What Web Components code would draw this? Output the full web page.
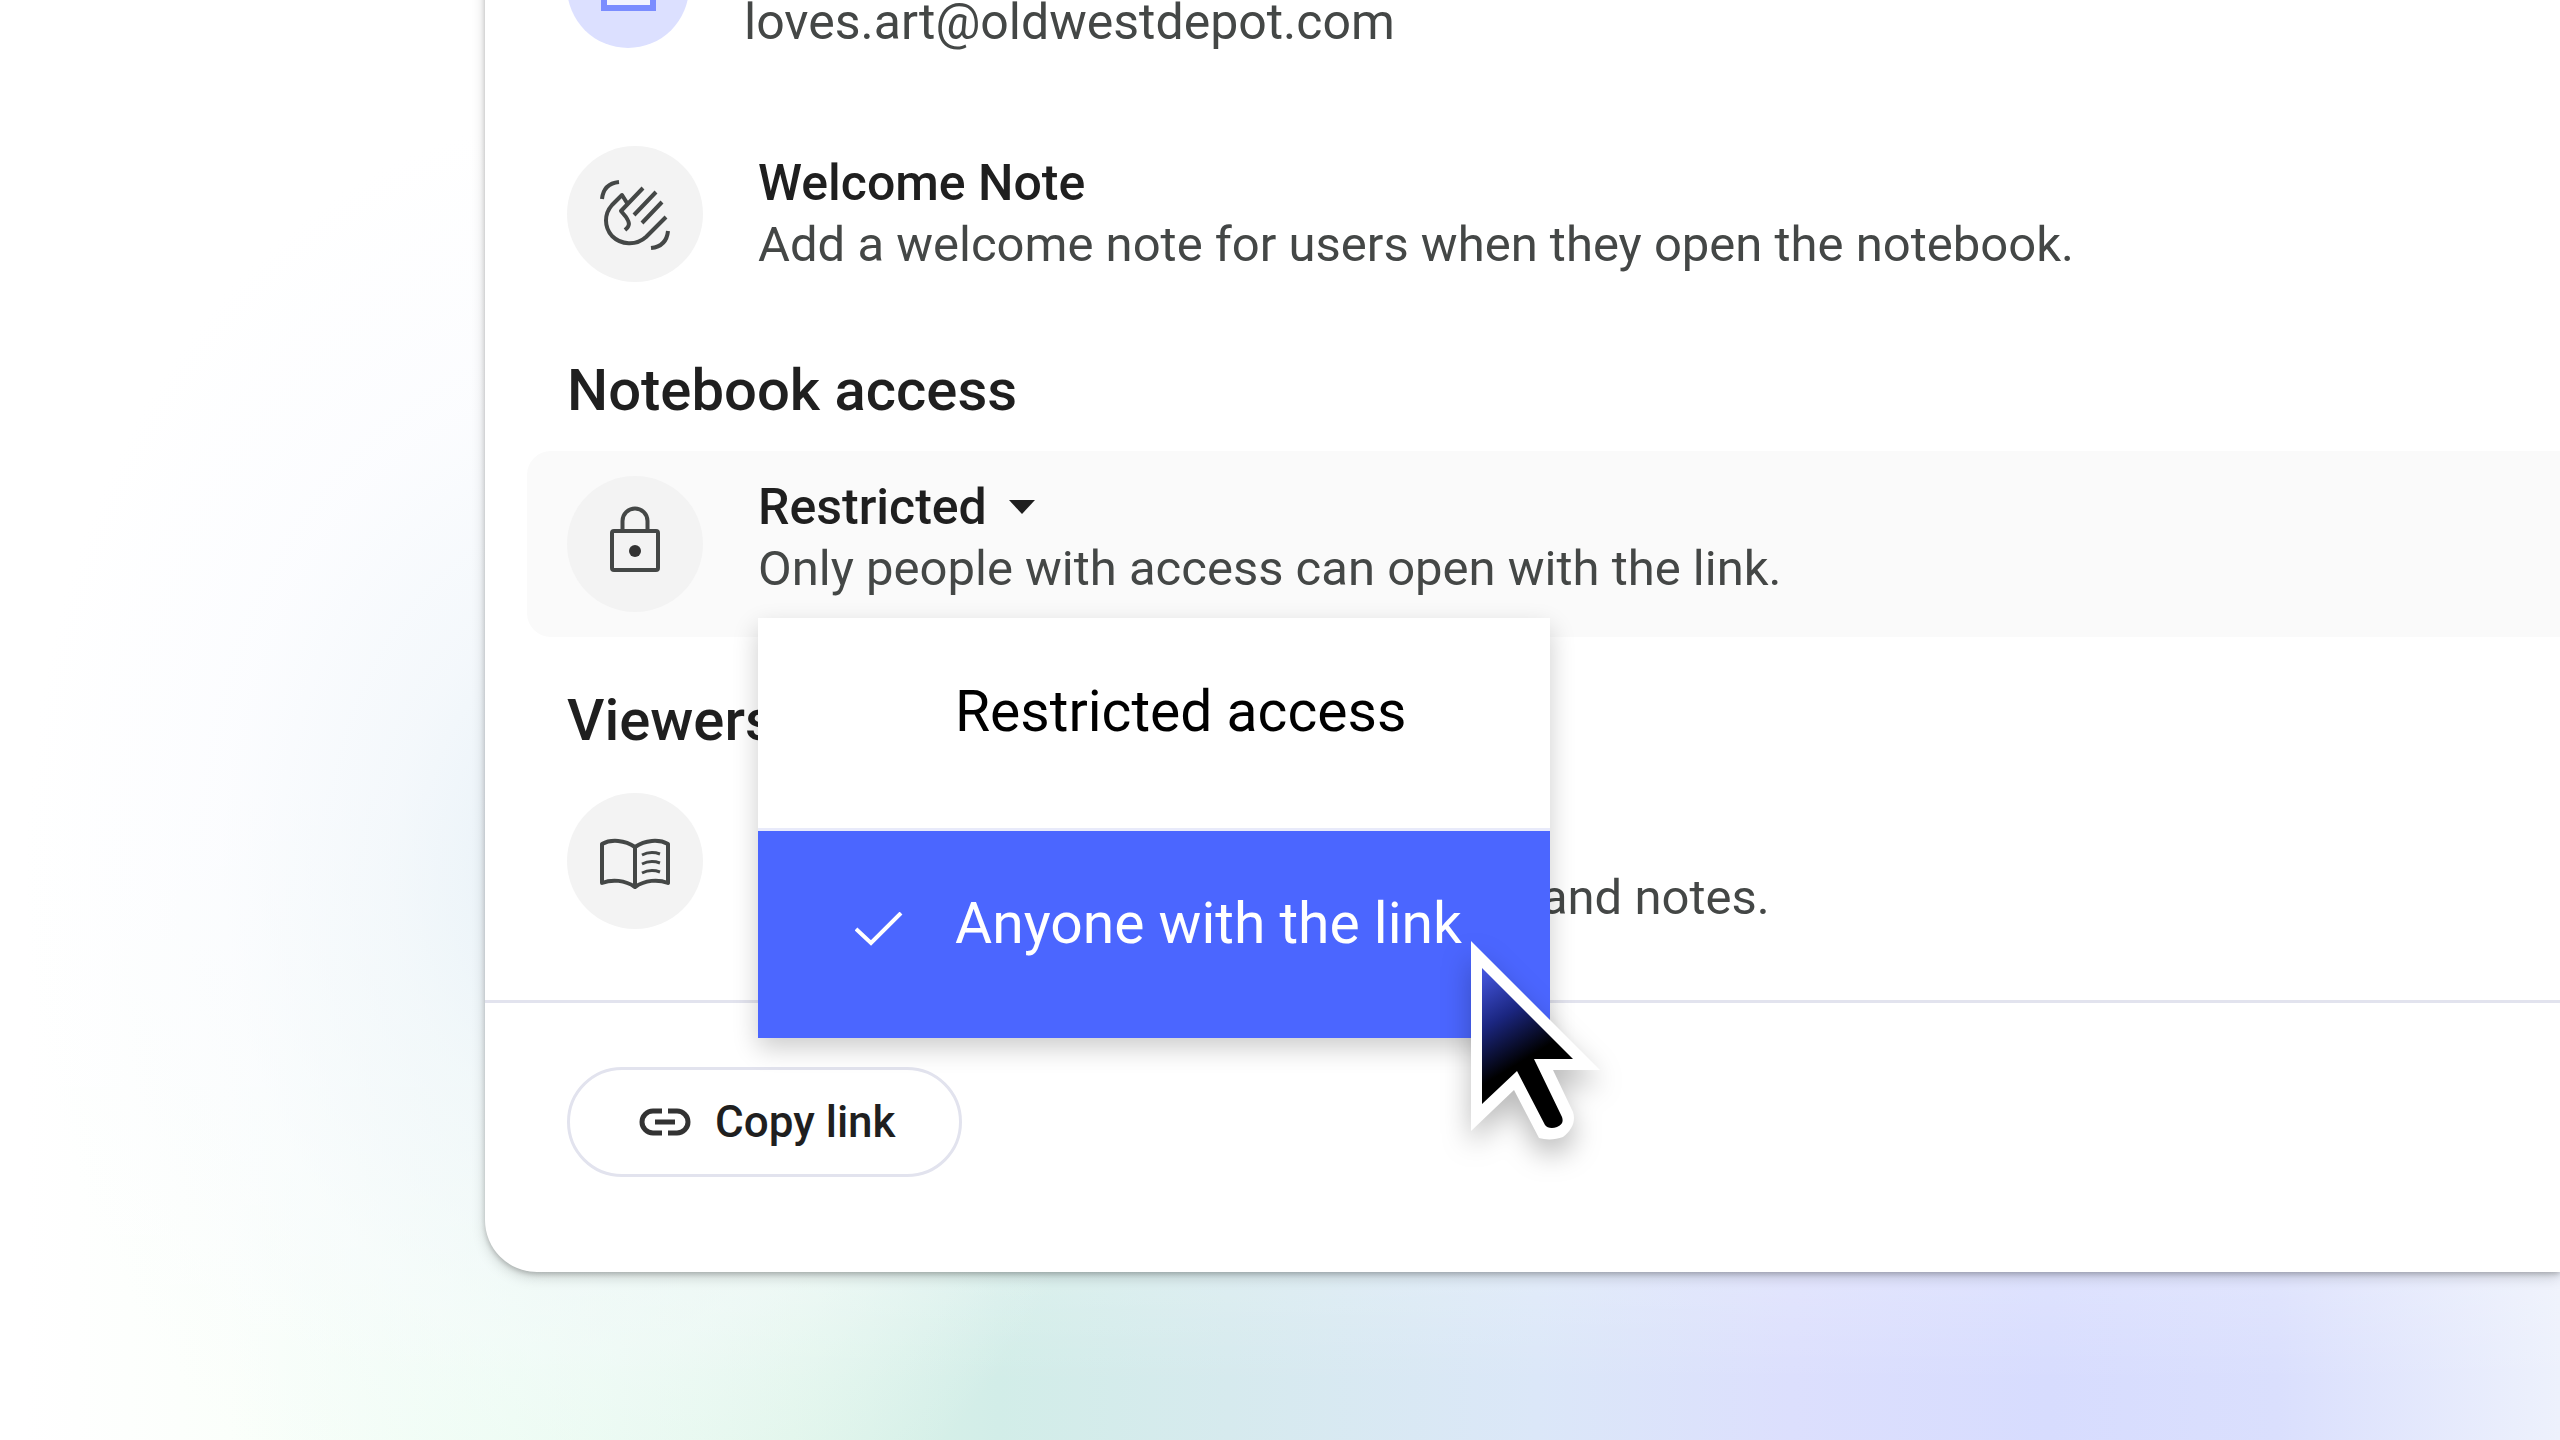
<!DOCTYPE html>
<html lang="en">
<head>
<meta charset="utf-8">
<title>Share notebook</title>
<style>
body {
    margin: 0;
    overflow: hidden;
    font-family: Roboto, "Liberation Sans", sans-serif;
}
</style>
</head>
<body>

<share-stage>
    <share-card>
        <share-row class="person end">
            <svg slot="icon" viewBox="0 0 122 122" width="122" height="122" fill="#f3f4ff" stroke="#7b8dff" stroke-width="6" aria-hidden="true">
                <path d="M37 45h49v37H37z"/>
            </svg>
            <span slot="text">loves.art@oldwestdepot.com</span>
        </share-row>

        <share-row class="center">
            <svg slot="icon" viewBox="0 0 136 136" width="136" height="136" fill="none" stroke="#444746" stroke-width="4" stroke-linejoin="round" aria-hidden="true">
                <path d="M35 53c1-10 7-16 17-17M101 85c-1 10-7 16-17 17"/>
                <path d="M76 42L54 65l5 6c4 6 4 9-1 13M60 57l-5-8L45 59c-8 9-8 22 0 31 9 9 24 10 34 1l20-20M67 69l22-23M75 77l20-21"/>
            </svg>
            <span slot="title">Welcome Note</span>
            <span slot="text">Add a welcome note for users when they open the notebook.</span>
        </share-row>

        <share-heading>Notebook access</share-heading>
        <share-row class="active">
            <svg slot="icon" viewBox="0 0 136 136" width="136" height="136" fill="none" stroke="#444746" stroke-width="4" aria-hidden="true">
                <rect x="45" y="55" width="46" height="39" rx="2"/>
                <path d="M55.500 55V45a12.500 12.500 0 0 1 25 0v10"/>
                <circle cx="68" cy="75" r="6" fill="#333" stroke="none"/>
            </svg>
            <access-picker slot="title">Restricted</access-picker>
            <span slot="text">Only people with access can open with the link.</span>
        </share-row>

        <share-heading class="tight">Viewers</share-heading>
        <share-row class="end">
            <svg slot="icon" viewBox="0 0 136 136" width="136" height="136" fill="none" stroke="#444746" stroke-width="4" stroke-linejoin="round" aria-hidden="true">
                <path d="M68 54c-10-7-24-8-33-3v39c10-4 23-3 33 4 10-7 23-8 33-4V51c-9-5-23-4-33 3zM68 54v40"/>
                <path d="M75 62c6-3 12-3 18-1M75 71c6-3 12-3 18-1M75 80c6-3 12-3 18-1" stroke-width="3"/>
            </svg>
            <span slot="text">Viewers get access to chat sources and notes.</span>
        </share-row>

        <copy-link slot="footer">Copy link</copy-link>
    </share-card>
</share-stage>

<script>
class ShareElement extends HTMLElement {

    constructor(){
        super()

        const template = document.createElement('template')
        template.innerHTML = this.constructor.markup

        this.attachShadow({mode:'open'})
        this.shadowRoot.appendChild(template.content.cloneNode(true))
    }

}

class ShareStage extends ShareElement {
    static markup = `
<style>
:host{
    display: block;
    box-sizing: border-box;
    min-height: 100vh;
    padding-left: 485px;
    overflow: hidden;
    background:
        radial-gradient(ellipse 22% 52% at 23% 60%, #e5f0f7, #eff5fab0 35%, #f8fafe80 65%, #fff0),
        linear-gradient(180deg, #fff 55%, #fff0 96%),
        linear-gradient(90deg, #fff 1%, #fbfffb 9%, #eafdf0 20%, #ddf5e8 31%, #d2ede8 39%, #d6eaee 48%, #dbe7f8 60%, #dcdffd 70%, #d7dcfe 80%, #dadffd 89%, #edf1fc 100%);
}
</style>
<slot></slot>
`
}

class ShareCard extends ShareElement {
    static markup = `
<style>
:host{
    display: block;
    margin-top: -114px;
    padding-top: 40px;
    background: #fff;
    border-radius: 0 0 0 52px;
    box-shadow: 0 2px 5px #00000033, 0 5px 14px #0000002b;
}

main{
    padding: 0 0 46px 42px;
}

footer{
    border-top: 3px solid #e2e3ee;
    padding: 64px 82px 95px;
}
</style>
<main><slot></slot></main>
<footer><slot name="footer"></slot></footer>
`
}

class ShareHeading extends ShareElement {
    static markup = `
<style>
:host{
    display: block;
    padding: 51px 40px 29px;
}

:host(.tight){
    padding-bottom: 16px;
}

h2{
    margin: 0;
    font-size: 58px;
    line-height: 64px;
    font-weight: 500;
    color: #1f1f1f;
}
</style>
<h2><slot></slot></h2>
`
}

class ShareRow extends ShareElement {
    static markup = `
<style>
:host{
    display: flex;
    gap: 55px;
    padding: 25px 40px;
    border-radius: 24px 0 0 24px;
    font-size: 49px;
    line-height: 62px;
    color: #444746;
}

:host(.active){
    background: #fafafa;
}

:host(.person){
    padding: 0 40px 73px;
    font-size: 50px;
    line-height: 52px;
}

:host(.center){ align-items: center; }
:host(.end){ align-items: flex-end; }

.icon{
    display: flex;
    border-radius: 50%;
    background: #f3f3f3;
}

:host(.person) .icon{
    background: #dce0ff;
}

.title{
    font-size: 50px;
    font-weight: 500;
    color: #1f1f1f;
}
</style>
<div class="icon"><slot name="icon"></slot></div>
<div>
    <div class="title"><slot name="title"></slot></div>
    <div><slot name="text"></slot></div>
</div>
`
}

class AccessPicker extends ShareElement {
    static markup = `
<style>
:host{
    display: block;
    position: relative;
}

button{
    display: flex;
    align-items: center;
    border: 0;
    padding: 0;
    background: none;
    font: inherit;
    color: inherit;
    text-align: left;
}

.trigger{
    gap: 22px;
}

.menu{
    position: absolute;
    top: 142px;
    left: 0;
    z-index: 1;
    width: 792px;
    background: #fff;
    box-shadow: 0 10px 24px #00000033;
}

.menu button{
    box-sizing: border-box;
    width: 100%;
    height: 210px;
    padding: 0 84px 22px 97px;
    gap: 52px;
    font-size: 57px;
    font-weight: 400;
    white-space: nowrap;
    color: #000;
}

.menu button[aria-checked="true"]{
    background: #4b66ff;
    color: #fff;
}

.menu button + button{
    border-top: 3px solid #e8eafa;
}

.menu button svg{
    align-self: flex-end;
    padding-bottom: 70px;
}

.cursor{
    position: absolute;
    top: 323px;
    left: 713px;
    overflow: visible;
    filter: drop-shadow(0 14px 14px #00000044);
}
</style>
<button class="trigger" aria-haspopup="menu" aria-expanded="true">
    <slot></slot>
    <svg width="26" height="14" viewBox="0 0 26 14" aria-hidden="true"><path d="M0 0h26L13 14z" fill="#1f1f1f"/></svg>
</button>
<div class="menu" role="menu">
    <button role="menuitemradio" aria-checked="false">
        <svg width="48" height="34" aria-hidden="true"></svg>
        Restricted access
    </button>
    <button role="menuitemradio" aria-checked="true">
        <svg width="48" height="34" viewBox="0 0 48 34" fill="none" stroke="#fff" stroke-width="4" aria-hidden="true"><path d="M1 17l15 14L46 1"/></svg>
        Anyone with the link
    </button>
    <svg class="cursor" width="130" height="202" viewBox="0 0 130 202" aria-hidden="true">
        <defs>
            <linearGradient id="shine" gradientUnits="userSpaceOnUse" x1="8" y1="34" x2="58" y2="116">
                <stop offset="0" stop-color="#4355dd"/>
                <stop offset="0.500" stop-color="#1b2680"/>
                <stop offset="1" stop-color="#000"/>
            </linearGradient>
        </defs>
        <path d="M0 0L129 129H82l20 42c3 9-1 18-10 25-8 3-17 3-24 1L43 149 0 190z" fill="#fff"/>
        <path d="M11 27L102 118H63l28 58c2 6-1 8-5 10-5 2-10 1-12-2L46 130 11 163z" fill="url(#shine)"/>
    </svg>
</div>
`
}

class CopyLink extends ShareElement {
    static markup = `
<style>
:host{
    display: flex;
}

button{
    display: flex;
    align-items: center;
    gap: 24px;
    padding: 22px 63px 22px 69px;
    border: 3px solid #e2e3ee;
    border-radius: 55px;
    background: #fff;
    font: 500 44px/60px Roboto, "Liberation Sans", sans-serif;
    color: #1f1f1f;
}
</style>
<button>
    <svg width="52" height="28" viewBox="0 0 52 28" fill="none" stroke="#333" stroke-width="5" aria-hidden="true">
        <path d="M23 3H14a11 11 0 0 0 0 22h9M29 3h9a11 11 0 0 1 0 22h-9M16 14h20"/>
    </svg>
    <slot></slot>
</button>
`
}

window.customElements.define('share-stage', ShareStage)
window.customElements.define('share-card', ShareCard)
window.customElements.define('share-heading', ShareHeading)
window.customElements.define('share-row', ShareRow)
window.customElements.define('access-picker', AccessPicker)
window.customElements.define('copy-link', CopyLink)
</script>
</body>
</html>
